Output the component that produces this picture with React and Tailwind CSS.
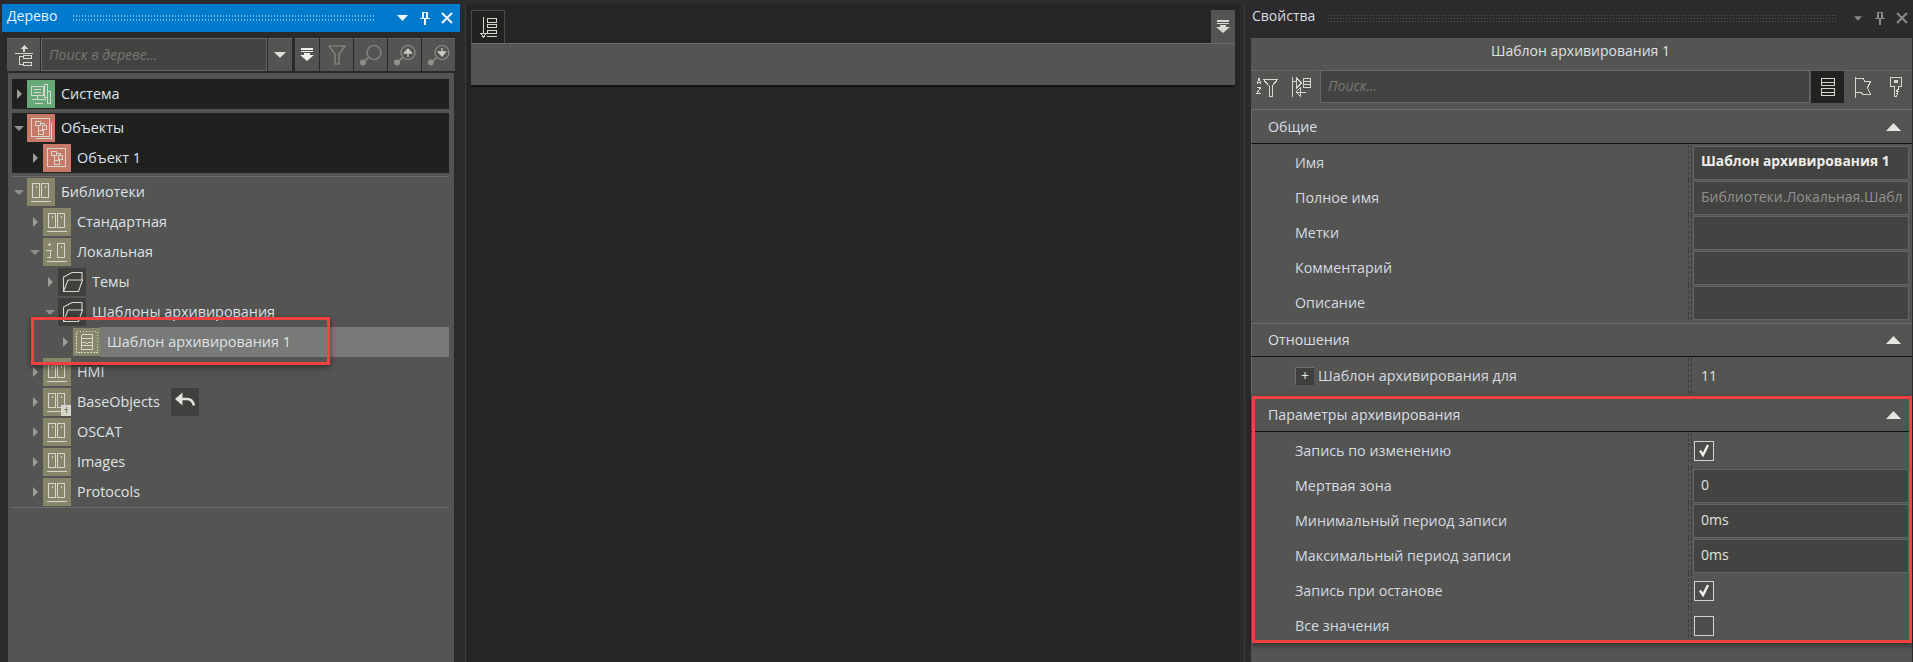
const L = "#d6d6ce";
const S = ({ w = 28, h = 28, vb, children, className = "", smooth }) => (
  <svg width={w} height={h} viewBox={vb || `0 0 ${w} ${h}`} fill="none" stroke={L} strokeWidth="1" shapeRendering={smooth ? "auto" : "crispEdges"} className={`shrink-0 ${className}`}>{children}</svg>
);
const Lib = ({ local, badge }) => (
  <S>
    {local ? <path d="M5 6.5h3M6.5 5v3M3 12.5h6M7.5 12.5v7H4" /> : <rect x="5.5" y="5.5" width="7" height="14" />}
    <rect x="14.5" y="5.5" width="7" height="14" />
    {!local && <path d="M9 8v2" />}
    <path d="M18 8v2" />
    <path d="M4 23.5h20" />
    {badge && <g><rect x="18" y="17" width="10" height="11" fill={L} stroke="none" /><path d="M23 19v6M21 21h4" stroke="#85866a" /></g>}
  </S>
);
const Sys = () => (
  <S><rect x="4.5" y="6.5" width="12" height="9" /><path d="M7 9.5h7M7 12.5h7M10.5 15.5v4M5 19.5h14M8 23.5h8" /><rect x="17.5" y="4.5" width="3" height="13" /><rect x="20.5" y="11.5" width="3" height="12" /></S>
);
const Obj = ({ wrap }) => (
  <S>
    {wrap && <path d="M24.5 8.5v16h-16" />}
    <rect x="4.5" y="4.5" width="18" height="18" />
    <rect x="8.5" y="7.5" width="5" height="4" /><rect x="15.5" y="11.5" width="4" height="4" /><rect x="11.5" y="16.5" width="5" height="4" />
    <path d="M11 11.500v5M13.500 9.500h4v2" />
  </S>
);
const Folder = () => (
  <S smooth><path d="M14 4.500h10v8M14 4.500L5.500 9v14.500h15l4-11.500H10L5.500 23.500" strokeWidth="1.100" /></S>
);
const Tpl = () => (
  <S>
    <rect x="3.500" y="3.500" width="21" height="21" strokeDasharray="1.500 1.500" />
    <path d="M8.500 6.500v15M19.500 6.500v15M8.500 6.500h11M8.500 10.500h11M8.500 14.500h4l1.500 1 1.500-1h4M8.500 21.500h11M8.500 17.500h11" />
  </S>
);
const Back = () => (
  <svg width="28" height="28" viewBox="0 0 28 28" fill="none" className="shrink-0">
    <path d="M9 11h7c4 0 6 2.500 7 6.500" stroke="#e2e2dc" strokeWidth="2.600" />
    <path d="M11.500 4.500L4 11l7.500 6.500z" fill="#e2e2dc" />
  </svg>
);

const Arrow = ({ open }) => open ? (
  <svg width="10" height="5" viewBox="0 0 10 5" className="shrink-0"><path d="M0 0h10L5 5z" fill="#8f8f8b" /></svg>
) : (
  <svg width="5" height="10" viewBox="0 0 5 10" className="shrink-0"><path d="M0 0l5 5-5 5z" fill="#9c9c98" /></svg>
);

const pads = ["pl-0", "pl-[16px]", "pl-[31px]", "pl-[46px]"];
const Row = ({ level = 0, open, bg, icon, label, selected, extra }) => (
  <div className={`relative flex h-[30px] items-center ${pads[level]}`}>
    <div className="flex h-full w-[15px] shrink-0 items-center justify-center pr-px"><Arrow open={open} /></div>
    <div className="flex h-[30px] flex-1 items-center">
      <div className={`flex h-[28px] w-[28px] shrink-0 items-center justify-center ${bg}`}>{icon}</div>
      <div className={`flex h-[30px] flex-1 items-center ${selected ? "-ml-px bg-[#797977] pl-[7px]" : "pl-[6px]"}`}>
        <span className="whitespace-nowrap pb-[1px] text-[14.4px] text-[#dde3e8]">{label}</span>
        {extra}
      </div>
    </div>
  </div>
);

const Tb = ({ children, className = "w-[33px]", dark }) => (
  <div className={`flex h-[33px] shrink-0 items-center justify-center border-t border-t-[#656563] ${dark ? "bg-[#222221]" : "bg-[#545452]"} ${className}`}>{children}</div>
);
const DropDown = ({ c = "#e0e0da" }) => (
  <svg width="12" height="6" viewBox="0 0 12 6"><path d="M0 0h12L6 6z" fill={c} /></svg>
);
const Collapse = ({ c = "#eeeeea" }) => (
  <svg width="14" height="14" viewBox="0 0 14 14" fill={c}><path d="M1 0h12v2H1zM1 3h12v1H1zM4 5h6v2h4l-7 6-7-6h4z" /></svg>
);
const Magnifier = ({ children }) => (
  <svg width="24" height="22" viewBox="0 0 24 22" fill="none">
    <circle cx="15" cy="8.500" r="7" stroke="#8e8e8a" strokeWidth="1.200" />
    <path d="M9.500 13.500L6 17" stroke="#8e8e8a" strokeWidth="1.500" />
    <circle cx="4" cy="18.500" r="3" fill="#8e8e8a" />
    {children}
  </svg>
);

const TitleIcons = ({ c, dim }) => (
  <div className="flex items-center">
    <div className="flex w-[25px] justify-center"><svg width={dim ? 8 : 11} height={dim ? 5 : 6} viewBox="0 0 11 6"><path d="M0 0h11L5.500 6z" fill={c} /></svg></div>
    <div className="flex w-[20px] justify-center">
      <svg width="12" height="14" viewBox="0 0 12 14" fill={c}><path d="M1 7h10v1H7v6H5V8H1zM3 1h6v6H7V2H5v5H3z" /></svg>
    </div>
    <div className="flex w-[23px] justify-center">
      <svg width="12" height="12" viewBox="0 0 12 12" stroke={c} strokeWidth="2"><path d="M1 1l10 10M11 1L1 11" /></svg>
    </div>
  </div>
);

const PropRow = ({ label, children, plus }) => (
  <div className="flex h-[35px] border-l border-l-[#6a6a68]">
    <div className="flex w-[436px] shrink-0 items-center whitespace-nowrap pl-[43px] text-[14.3px] text-[#d5dbe0]">
      {plus && (
        <span className="mr-[4px] flex h-[18px] w-[19px] items-center justify-center border-l border-t border-[#6f6f6d] bg-[#3f3f3d] text-[14px] leading-none text-[#e6e6e2]">+</span>
      )}
      {label}
    </div>
    <div className="w-[4px] shrink-0 border-x border-dashed border-[#3b3b39]" />
    <div className="flex min-w-0 flex-1 items-center pl-[1px] pr-[3px]">{children}</div>
  </div>
);
const Box = ({ children, bold, dim }) => (
  <div className={`flex h-[34px] w-full items-center whitespace-nowrap border border-[#636361] bg-[#434341] pb-[2px] pl-[7px] ${bold ? "text-[13.8px] font-bold text-[#ecece8]" : dim ? "text-[14px] text-[#92928e]" : "text-[14px] text-[#e2e2de]"}`}>{children}</div>
);
const Check = ({ on }) => (
  <div className="ml-[1px] flex h-[20px] w-[20px] items-center justify-center border border-[#d2d2ce] bg-[#4c4c4a]">
    {on && <svg width="12" height="13" viewBox="0 0 12 13" fill="none" stroke="#f0f0ec" strokeWidth="2.400"><path d="M2 6.500l3 4.500 5-10" /></svg>}
  </div>
);
const Section = ({ title, className = "" }) => (
  <div className={`flex h-[34px] items-center justify-between border-y border-l border-y-[#707070] border-b-[#111111] border-l-[#6a6a68] pl-[16px] pr-[11px] text-[14.2px] text-[#d9dfe4] ${className}`}>
    <span>{title}</span>
    <svg width="15" height="8" viewBox="0 0 15 8"><path d="M7.500 0L15 8H0z" fill="#e6e6e2" /></svg>
  </div>
);

export default function App() {
  return (
    <div className="relative flex h-[662px] w-[1913px] overflow-hidden bg-[#2b2b2e] pl-[2px] pt-[4px]" style={{ fontFamily: '"Open Sans","Noto Sans",sans-serif' }}>
      {/* left */}
      <div className="flex w-[458px] shrink-0 flex-col">
        <div className="flex h-[28px] shrink-0 items-center bg-[#007acc] pl-[5px] pr-[2px] text-[#eaf5fc]">
          <span className="mr-[15px] w-[50px] pb-[5px] text-[14px]">Дерево</span>
          <div className="h-[9px] flex-1 bg-[radial-gradient(circle,#7dbce6_0.7px,transparent_0.8px)] bg-[length:3px_4px]" />
          <div className="w-[15px]" />
          <TitleIcons c="#f4f8fb" />
        </div>
        <div className="flex flex-1 flex-col bg-[#2a2a2c] pl-[5px] pr-[5px] pt-[6px]">
          <div className="flex h-[33px] shrink-0 gap-px">
            <Tb>
              <S w={22} h={24}><path d="M2 10.500h18M11 2l4 4h-3v3h-2V6H7z" fill={L} stroke="none" /><path d="M2 10.500h18" /><path d="M6.500 13v8M6 13.500h4M6 21.500h4" /><rect x="10.500" y="12.500" width="8" height="3" /><rect x="10.500" y="19.500" width="8" height="3" /></S>
            </Tb>
            <div className="flex h-[33px] w-[226px] shrink-0 items-center border border-[#676765] bg-[#434341] pb-[1px] pl-[7px] text-[14px] italic text-[#787874]">Поиск в дереве...</div>
            <Tb className="w-[24px]"><DropDown /></Tb>
            <div className="w-[1px]" />
            <Tb className="w-[24px]"><Collapse /></Tb>
            <Tb>
              <svg width="18" height="20" viewBox="0 0 18 20" fill="none" stroke="#8e8e8a" strokeWidth="1.200"><path d="M1 1h16l-6 8v10H7V9z" /></svg>
            </Tb>
            <Tb><Magnifier /></Tb>
            <Tb><Magnifier><path d="M15 13V6M11.500 9l3.500-4 3.500 4z" stroke="#c8c8c4" fill="#c8c8c4" strokeWidth="1.300" /></Magnifier></Tb>
            <Tb><Magnifier><path d="M15 4v7M11.500 8l3.500 4 3.500-4z" stroke="#c8c8c4" fill="#c8c8c4" strokeWidth="1.300" /></Magnifier></Tb>
          </div>
          <div className="ml-[1px] mr-[1px] mt-[2px] flex-1 bg-[#545452] pl-[4px] pr-[5px] pt-[6px]">
            <div className="bg-[#20201f]">
              <Row bg="bg-[#66a878]" icon={<Sys />} label="Система" />
            </div>
            <div className="mt-[4px] bg-[#20201f]">
              <Row open bg="bg-[#c87a69]" icon={<Obj wrap />} label="Объекты" />
              <Row level={1} bg="bg-[#c87a69]" icon={<Obj />} label="Объект 1" />
            </div>
            <div className="mt-[3px] h-px bg-[#6c6c6a]" />
            <div className="border-b border-b-[#6c6c6a]">
              <Row open bg="bg-[#85866a]" icon={<Lib />} label="Библиотеки" />
              <Row level={1} bg="bg-[#85866a]" icon={<Lib />} label="Стандартная" />
              <Row level={1} open bg="bg-[#85866a]" icon={<Lib local />} label="Локальная" />
              <Row level={2} bg="bg-[#3f3f3d]" icon={<Folder />} label="Темы" />
              <Row level={2} open bg="bg-[#3f3f3d]" icon={<Folder />} label="Шаблоны архивирования" />
              <Row level={3} selected bg="bg-[#85866a]" icon={<Tpl />} label="Шаблон архивирования 1" />
              <Row level={1} bg="bg-[#85866a]" icon={<Lib />} label="HMI" />
              <Row level={1} bg="bg-[#85866a]" icon={<Lib badge />} label="BaseObjects" extra={
                <div className="ml-[11px] flex h-[28px] w-[28px] items-center justify-center bg-[#3f3f3d]"><Back /></div>
              } />
              <Row level={1} bg="bg-[#85866a]" icon={<Lib />} label="OSCAT" />
              <Row level={1} bg="bg-[#85866a]" icon={<Lib />} label="Images" />
              <Row level={1} bg="bg-[#85866a]" icon={<Lib />} label="Protocols" />
            </div>
          </div>
        </div>
      </div>

      {/* center */}
      <div className="ml-[5px] flex w-[775px] shrink-0 flex-col border-l border-l-[#3a3a3c] bg-[#252525] pl-[5px] pr-[5px] pt-[6px]">
        <div className="flex h-[33px] shrink-0 justify-between">
          <div className="flex h-[33px] w-[34px] items-center justify-center border-x border-t border-[#4a4a48] bg-[#222221]">
            <S w={20} h={24}><path d="M5.500 2v17" /><path d="M2 18h7l-3.500 4z" /><rect x="9.500" y="3.500" width="9" height="4" /><rect x="9.500" y="9.500" width="9" height="3" /><rect x="9.500" y="15.500" width="9" height="3" /><path d="M9 21.500h10" /></S>
          </div>
          <div className="flex h-[33px] w-[24px] items-center justify-center bg-[#545452]"><Collapse c="#d8d8d4" /></div>
        </div>
        <div className="box-content h-[41px] shrink-0 border-b-[2px] border-t border-b-[#151515] border-t-[#6c6c6a] bg-[#545452]" />
      </div>

      {/* right */}
      <div className="ml-[4px] flex min-w-0 flex-1 flex-col">
        <div className="flex h-[28px] shrink-0 items-center border-l border-l-[#3a3a3c] pl-[7px] text-[#d8dde0]">
          <span className="mr-[12px] pb-[5px] text-[14px]">Свойства</span>
          <div className="h-[8px] flex-1 bg-[radial-gradient(circle,#55555a_0.6px,transparent_0.7px)] bg-[length:3px_3px]" />
          <div className="w-[8px]" />
          <TitleIcons c="#8a8a8c" dim />
        </div>
        <div className="flex flex-1 flex-col border-l border-l-[#3a3a3c] pl-[6px] pt-[6px]">
          <div className="mr-[1px] flex-1 bg-[#545452]">
            <div className="flex h-[32px] items-center justify-center pb-[8px] pr-[2px] text-[14px] text-[#dde1e4]">Шаблон архивирования 1</div>
            <div className="flex h-[33px] gap-px">
              <Tb className="w-[33px]">
                <S w={24} h={22}><path d="M3 2l-2 6M3 2l2 6M1.500 6h3M1 11h4l-4 6h4" /><path d="M7 3h15l-6 7v10h-3V10z" /></S>
              </Tb>
              <Tb className="w-[33px]">
                <S w={24} h={24}><path d="M2.500 2v20M2.500 6h4M6.500 3l5 5-5 5zM16 17H7M10 13l-4 4 4 4z" /><rect x="13.500" y="3.500" width="7" height="3" /><rect x="13.500" y="6.500" width="7" height="3" /><rect x="13.500" y="9.500" width="7" height="3" /></S>
              </Tb>
              <div className="ml-px flex h-[33px] w-[490px] shrink-0 items-center border border-[#676765] bg-[#434341] pb-[2px] pl-[7px] text-[14px] italic text-[#787874]">Поиск...</div>
              <Tb dark className="w-[33px]">
                <S w={16} h={20}><rect x="1.500" y="1.500" width="13" height="7" /><path d="M1 5h14" /><rect x="1.500" y="11.500" width="13" height="7" /><path d="M1 15h14" /></S>
              </Tb>
              <Tb className="w-[33px]">
                <S w={20} h={24}><path d="M3.500 2v21M3.500 3.500h8l1 3h6l-3 6 3 7h-8l-1-2h-6" /></S>
              </Tb>
              <Tb className="w-[33px]">
                <S w={16} h={24}><path d="M2.500 2.500h11v9h-3v3h-1l-1 2h2l-2 2h1l-1 3h-2v-10h-4z" /><rect x="6" y="5" width="4" height="3" fill={L} stroke="none" /></S>
              </Tb>
            </div>
            <Section title="Общие" className="mt-[6px] h-[35px]" />
            <div className="mt-[1px]" />
            <PropRow label="Имя"><Box bold>Шаблон архивирования 1</Box></PropRow>
            <PropRow label="Полное имя"><Box dim>Библиотеки.Локальная.Шабл</Box></PropRow>
            <PropRow label="Метки"><Box /></PropRow>
            <PropRow label="Комментарий"><Box /></PropRow>
            <PropRow label="Описание"><Box /></PropRow>
            <Section title="Отношения" className="mt-[3px]" />
            <div className="mt-[1px]" />
            <PropRow label="Шаблон архивирования для" plus><span className="pl-[8px] text-[14px] text-[#e2e2de]">11</span></PropRow>
            <Section title="Параметры архивирования" className="mt-[5px]" />
            <div className="mt-[1px]" />
            <PropRow label="Запись по изменению"><Check on /></PropRow>
            <PropRow label="Мертвая зона"><Box>0</Box></PropRow>
            <PropRow label="Минимальный период записи"><Box>0ms</Box></PropRow>
            <PropRow label="Максимальный период записи"><Box>0ms</Box></PropRow>
            <PropRow label="Запись при останове"><Check on /></PropRow>
            <PropRow label="Все значения"><Check /></PropRow>
          </div>
        </div>
      </div>

      {/* annotations */}
      <div className="absolute left-[31px] top-[317px] h-[48px] w-[299px] border-[3px] border-[#f04040] shadow-[0_2px_6px_rgba(0,0,0,0.5)]" />
      <div className="absolute left-[1252px] top-[396px] h-[247px] w-[660px] border-[3px] border-[#f04040] shadow-[0_2px_6px_rgba(0,0,0,0.5)]" />
    </div>
  );
}
